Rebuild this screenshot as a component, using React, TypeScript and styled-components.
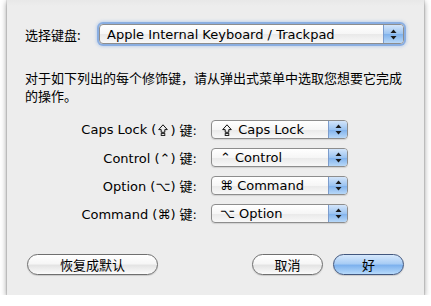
import React from "react";
import styled, { createGlobalStyle } from "styled-components";

const GlobalStyle = createGlobalStyle`
  html, body {
    margin: 0;
    padding: 0;
    background: #ffffff;
  }
  body {
    font-family: "DejaVu Sans", "Noto Sans CJK SC", sans-serif;
    font-size: 13px;
    color: #000;
  }
`;

const Sheet = styled.div`
  margin-left: 7px;
  width: 417px;
  height: 295px;
  box-sizing: border-box;
  background: linear-gradient(#e8e8e8, #ededed 6px, #ededed);
  box-shadow: 0 2px 6px rgba(0, 0, 0, 0.45), 0 0 1px rgba(0, 0, 0, 0.5);
  padding: 24px 20px 0 18px;
  display: flex;
  flex-direction: column;
`;

const KeyboardRow = styled.div`
  display: flex;
  align-items: center;
`;

const Label = styled.span`
  width: 74px;
  font-family: "Noto Sans CJK SC", sans-serif;
  font-size: 13px;
  white-space: nowrap;
`;

const Intro = styled.p`
  margin: 25px 0 0;
  width: 384px;
  font-family: "Noto Sans CJK SC", sans-serif;
  font-size: 13px;
  line-height: 18px;
`;

const KeyGrid = styled.div`
  margin-top: 15px;
  display: grid;
  grid-template-columns: 172px 137px;
  column-gap: 14px;
  row-gap: 9px;
  align-items: center;
`;

const KeyLabel = styled.span`
  display: flex;
  justify-content: flex-end;
  align-items: center;
  white-space: nowrap;
  font-size: 13px;
  font-family: "DejaVu Sans", "Noto Sans CJK SC", sans-serif;
`;

const Popup = styled.div<{ $wide?: boolean }>`
  display: flex;
  align-items: stretch;
  height: ${(p) => (p.$wide ? 20 : 19)}px;
  width: ${(p) => (p.$wide ? "305px" : "137px")};
  box-sizing: border-box;
  border: 1px solid #8d8d8d;
  border-radius: 4px;
  background: linear-gradient(#ffffff, #f6f6f6 50%, #e9e9e9 51%, #f8f8f8);
  box-shadow: ${(p) =>
    p.$wide
      ? "0 0 0 2px rgba(118, 160, 222, 0.75), 0 0 3px 3px rgba(140, 180, 235, 0.45)"
      : "0 1px 1px rgba(0,0,0,0.12)"};
  overflow: hidden;
`;

const PopupText = styled.span<{ $wide?: boolean }>`
  flex: 1;
  display: flex;
  align-items: center;
  padding-left: ${(p) => (p.$wide ? 7 : 8)}px;
  white-space: nowrap;
  font-size: 13px;
`;

const Stepper = styled.span<{ $wide?: boolean }>`
  width: ${(p) => (p.$wide ? 19 : 18)}px;
  display: flex;
  align-items: center;
  justify-content: center;
  border-left: 1px solid #7c9ccc;
  background: linear-gradient(#d3e5fa, #9cc4f1 50%, #7fb1ec 51%, #b8d8f8);
`;

const CapsGlyph = styled.svg`
  flex: none;
  margin: 0 2px;
`;

const ButtonRow = styled.div`
  margin-top: 31px;
  display: flex;
  align-items: center;
  padding-left: 2px;
`;

const PushButton = styled.button<{ $primary?: boolean; $width: number; $gap?: number }>`
  width: ${(p) => p.$width}px;
  height: 21px;
  margin: 0 0 0 ${(p) => p.$gap ?? 0}px;
  padding: 0;
  border-radius: 11px;
  border: 1px solid ${(p) => (p.$primary ? "#42577e" : "#6f6f6f")};
  background: ${(p) =>
    p.$primary
      ? "linear-gradient(#d6e8fc, #a9cdf5 45%, #7eb2ee 55%, #b7dafb)"
      : "linear-gradient(#ffffff, #f6f6f6 45%, #e4e4e4 55%, #fbfbfb)"};
  box-shadow: 0 1px 1px rgba(0, 0, 0, 0.15);
  font-family: "Noto Sans CJK SC", sans-serif;
  font-size: 13px;
  color: #000;
  line-height: 19px;
`;

const Spacer = styled.div`
  flex: 1;
`;

const Arrows = () => (
  <svg width="7" height="11" viewBox="0 0 7 11">
    <path d="M3.5 0.5 L6.5 4 L0.5 4 Z" fill="#1a1a1a" />
    <path d="M3.5 10.5 L6.5 7 L0.5 7 Z" fill="#1a1a1a" />
  </svg>
);

const CapsLockIcon = () => (
  <CapsGlyph width="10" height="12" viewBox="0 0 10 12">
    <path
      d="M5 0.8 L9.3 5.6 L6.8 5.6 L6.8 8.3 L3.2 8.3 L3.2 5.6 L0.7 5.6 Z"
      fill="none"
      stroke="#111"
      strokeWidth="1"
      strokeLinejoin="round"
    />
    <rect x="3.2" y="9.6" width="3.6" height="1.9" fill="none" stroke="#111" strokeWidth="0.9" />
  </CapsGlyph>
);

type KeyRow = { before: string; icon?: boolean; after: string; value: React.ReactNode };

const keyRows: KeyRow[] = [
  {
    before: "Caps Lock (",
    icon: true,
    after: ") 键:",
    value: (
      <>
        <CapsLockIcon />
        &nbsp;Caps Lock
      </>
    ),
  },
  { before: "Control (⌃", after: ") 键:", value: "⌃ Control" },
  { before: "Option (⌥", after: ") 键:", value: "⌘ Command" },
  { before: "Command (⌘", after: ") 键:", value: "⌥ Option" },
];

const PopupButton = ({ value, wide }: { value: React.ReactNode; wide?: boolean }) => (
  <Popup $wide={wide}>
    <PopupText $wide={wide}>{value}</PopupText>
    <Stepper $wide={wide}>
      <Arrows />
    </Stepper>
  </Popup>
);

export default function App() {
  return (
    <>
      <GlobalStyle />
      <Sheet>
        <KeyboardRow>
          <Label>选择键盘:</Label>
          <PopupButton wide value="Apple Internal Keyboard / Trackpad" />
        </KeyboardRow>
        <Intro>
          对于如下列出的每个修饰键，请从弹出式菜单中选取您想要它完成的操作。
        </Intro>
        <KeyGrid>
          {keyRows.map((row) => (
            <React.Fragment key={row.before}>
              <KeyLabel>
                {row.before}
                {row.icon && <CapsLockIcon />}
                {row.after}
              </KeyLabel>
              <PopupButton value={row.value} />
            </React.Fragment>
          ))}
        </KeyGrid>
        <ButtonRow>
          <PushButton $width={131}>恢复成默认</PushButton>
          <Spacer />
          <PushButton $width={71}>取消</PushButton>
          <PushButton $width={71} $gap={10} $primary>
            好
          </PushButton>
        </ButtonRow>
      </Sheet>
    </>
  );
}
